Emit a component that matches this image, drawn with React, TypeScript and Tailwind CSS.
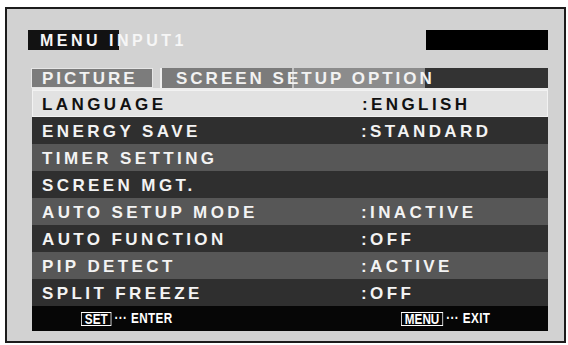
import React from 'react'

const rows = [
  { label: 'ENERGY SAVE', value: ':STANDARD', dark: true },
  { label: 'TIMER SETTING', value: '', dark: false },
  { label: 'SCREEN MGT.', value: '', dark: true },
  { label: 'AUTO SETUP MODE', value: ':INACTIVE', dark: false },
  { label: 'AUTO FUNCTION', value: ':OFF', dark: true },
  { label: 'PIP DETECT', value: ':ACTIVE', dark: false },
  { label: 'SPLIT FREEZE', value: ':OFF', dark: true },
]

export default function App() {
  return (
    <div className="h-[345px] w-[568px] bg-white pl-[5px] pt-[7px] font-['Liberation_Sans',Arial,sans-serif] font-bold">
      <div className="flex h-[336px] w-[561px] flex-col border-2 border-[#1c1c1c] bg-[#d2d2d2] pl-[25px] pr-[16px] pt-[21px]">
        {/* Title */}
        <div className="flex h-[20px] items-center justify-between">
          <span className="-ml-[4px] h-[20px] w-[200px] bg-[linear-gradient(to_right,#121212_0,#121212_91px,transparent_91px)] pl-[12px] pt-[1px] text-[16px] leading-[20px] tracking-[3.5px] text-[#f6f6f6]">
            MENU INPUT1
          </span>
          <div className="h-[20px] w-[122px] bg-black" />
        </div>

        {/* Tabs */}
        <div className="mt-[18px] flex h-[22px] border-b-2 border-[#ececec]">
          <div className="-ml-[1px] flex w-[122px] items-center border border-[#e6e6e6] bg-[#7c7c7c] pl-[10px] pt-[2px] text-[17px] tracking-[3px] text-[#f2f2f2]">
            PICTURE
          </div>
          <div className="ml-[7px] flex flex-1 items-center border-l-2 border-[#efefef] bg-[linear-gradient(to_right,#7b7b7b_0,#7b7b7b_130px,#c4c4c4_130px,#c4c4c4_132px,#8c8c8c_132px,#8c8c8c_263px,#333333_263px)] pl-[14px] pt-[2px] text-[17px] tracking-[3px] text-[#f2f2f2]">
            SCREEN SETUP OPTION
          </div>
        </div>

        {/* Rows */}
        <div className="flex h-[27px] items-center border border-[#f2f2f2] bg-[#e2e2e2] pl-[9px] pt-[3px] text-[17px] tracking-[3.4px] text-[#111]">
          <span className="w-[320px]">LANGUAGE</span>
          <span>:ENGLISH</span>
        </div>
        {rows.map((r) => (
          <div
            key={r.label}
            className={`flex h-[27px] items-center pl-[10px] pt-[3px] text-[17px] tracking-[3.4px] text-[#f3f3f3] ${
              r.dark ? 'bg-[#2f2f2f]' : 'bg-[#575757]'
            }`}
          >
            <span className="w-[319px]">{r.label}</span>
            <span>{r.value}</span>
          </div>
        ))}

        {/* Footer */}
        <div className="flex h-[25px] items-center bg-[#060606] pl-[49px] text-[15px] text-white">
          <div className="w-[320px]">
            <div className="flex origin-left scale-x-[0.78] items-center">
              <span className="h-[14px] w-[39px] border border-white text-center leading-[12px]">SET</span>
              <span className="ml-[4px] tracking-[0.5px]">··· ENTER</span>
            </div>
          </div>
          <div>
            <div className="flex origin-left scale-x-[0.78] items-center">
              <span className="h-[14px] w-[54px] border border-white text-center leading-[12px]">MENU</span>
              <span className="ml-[4px] tracking-[0.5px]">··· EXIT</span>
            </div>
          </div>
        </div>
      </div>
    </div>
  )
}
